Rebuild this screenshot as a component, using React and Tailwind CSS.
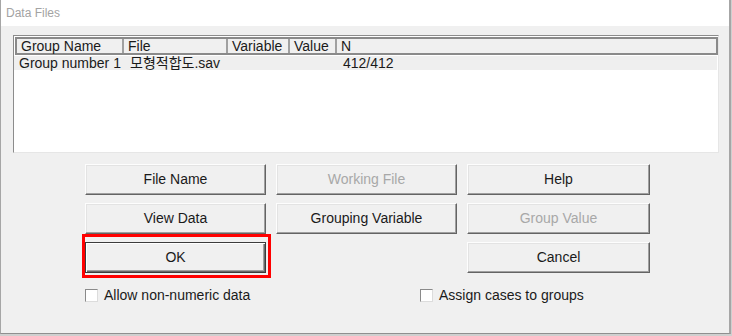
import React from 'react';

const font = { fontFamily: '"Liberation Sans", "Noto Sans CJK KR", Arial, sans-serif' };

function Btn({ children, disabled, isDefault }) {
  return (
    <div
      className={`h-[31px] flex items-center justify-center bg-[#f0f0f0] text-[14px] ${
        disabled ? 'text-[#a8a8a8]' : 'text-[#1a1a1a]'
      } ${
        isDefault
          ? 'border border-[#3c3c3c] shadow-[inset_1px_1px_0_#ffffff,inset_-1px_-1px_0_#696969,inset_-2px_-2px_0_#a0a0a0]'
          : 'border border-t-[#fdfdfd] border-l-[#fdfdfd] border-r-[#646464] border-b-[#646464] shadow-[inset_-1px_-1px_0_#a0a0a0,inset_1px_1px_0_#e3e3e3]'
      }`}
    >
      {children}
    </div>
  );
}

function Check({ label }) {
  return (
    <div className="flex items-center gap-[6px] text-[14px] text-[#1a1a1a]">
      <span className="w-[13px] h-[13px] bg-white border border-t-[#8a8a8a] border-l-[#8a8a8a] border-r-[#dcdcdc] border-b-[#dcdcdc]" />
      <span className="leading-none">{label}</span>
    </div>
  );
}

const cols = [
  { name: 'Group Name', w: 'w-[107px]' },
  { name: 'File', w: 'w-[104px]' },
  { name: 'Variable', w: 'w-[62px]' },
  { name: 'Value', w: 'w-[47px]' },
  { name: 'N', w: 'flex-1' },
];

export default function App() {
  return (
    <div className="w-[732px] h-[336px] bg-[#cfcfcf] overflow-hidden" style={font}>
      <div className="w-[731px] h-[334px] flex flex-col border-l border-r-2 border-b border-l-[#a6a6a6] border-r-[#a6a6a6] border-b-[#8f8f8f] bg-[#f0f0f0]">
        {/* title bar */}
        <div className="h-[26px] bg-white flex items-center pl-[5px] text-[12px] text-[#a3a3a3]">
          Data Files
        </div>

        <div className="pt-[9px] pl-[12px]">
          {/* list */}
          <div className="w-[706px] h-[118px] bg-white border border-t-[#8c8c8c] border-l-[#8c8c8c] border-r-[#e6e6e6] border-b-[#e6e6e6] flex flex-col">
            <div className="h-[18px] mx-[1px] mt-[1px] flex bg-[#f0f0f0] border-2 border-[#8a8a8a] text-[14px] text-[#1a1a1a] w-[703px]">
              {cols.map((c, i) => (
                <div
                  key={c.name}
                  className={`${c.w} flex items-center pl-[4px] leading-none ${
                    i < cols.length - 1 ? 'border-r-2 border-r-[#a0a0a0]' : ''
                  }`}
                >
                  {c.name}
                </div>
              ))}
            </div>
            <div className="h-[14px] mt-[1px] w-[703px] bg-[#efefef] flex items-center text-[14px] text-[#1a1a1a] leading-none">
              <span className="pl-[5px] w-[116px]">Group number 1</span>
              <span className="w-[213px]">모형적합도.sav</span>
              <span>412/412</span>
            </div>
          </div>

          {/* buttons */}
          <div className="ml-[72px] mt-[11px] grid grid-cols-[181px_181px_183px] gap-x-[10px] gap-y-[8px]">
            <Btn>File Name</Btn>
            <Btn disabled>Working File</Btn>
            <Btn>Help</Btn>
            <Btn>View Data</Btn>
            <Btn>Grouping Variable</Btn>
            <Btn disabled>Group Value</Btn>
            <div className="relative">
              <Btn isDefault>OK</Btn>
              <div className="absolute left-[-3px] top-[-8px] w-[189px] h-[44px] border-[3px] border-[#ff0000]" />
            </div>
            <div />
            <Btn>Cancel</Btn>
          </div>

          <div className="ml-[72px] mt-[15px] flex">
            <div className="w-[335px]">
              <Check label="Allow non-numeric data" />
            </div>
            <Check label="Assign cases to groups" />
          </div>
        </div>
      </div>
    </div>
  );
}
